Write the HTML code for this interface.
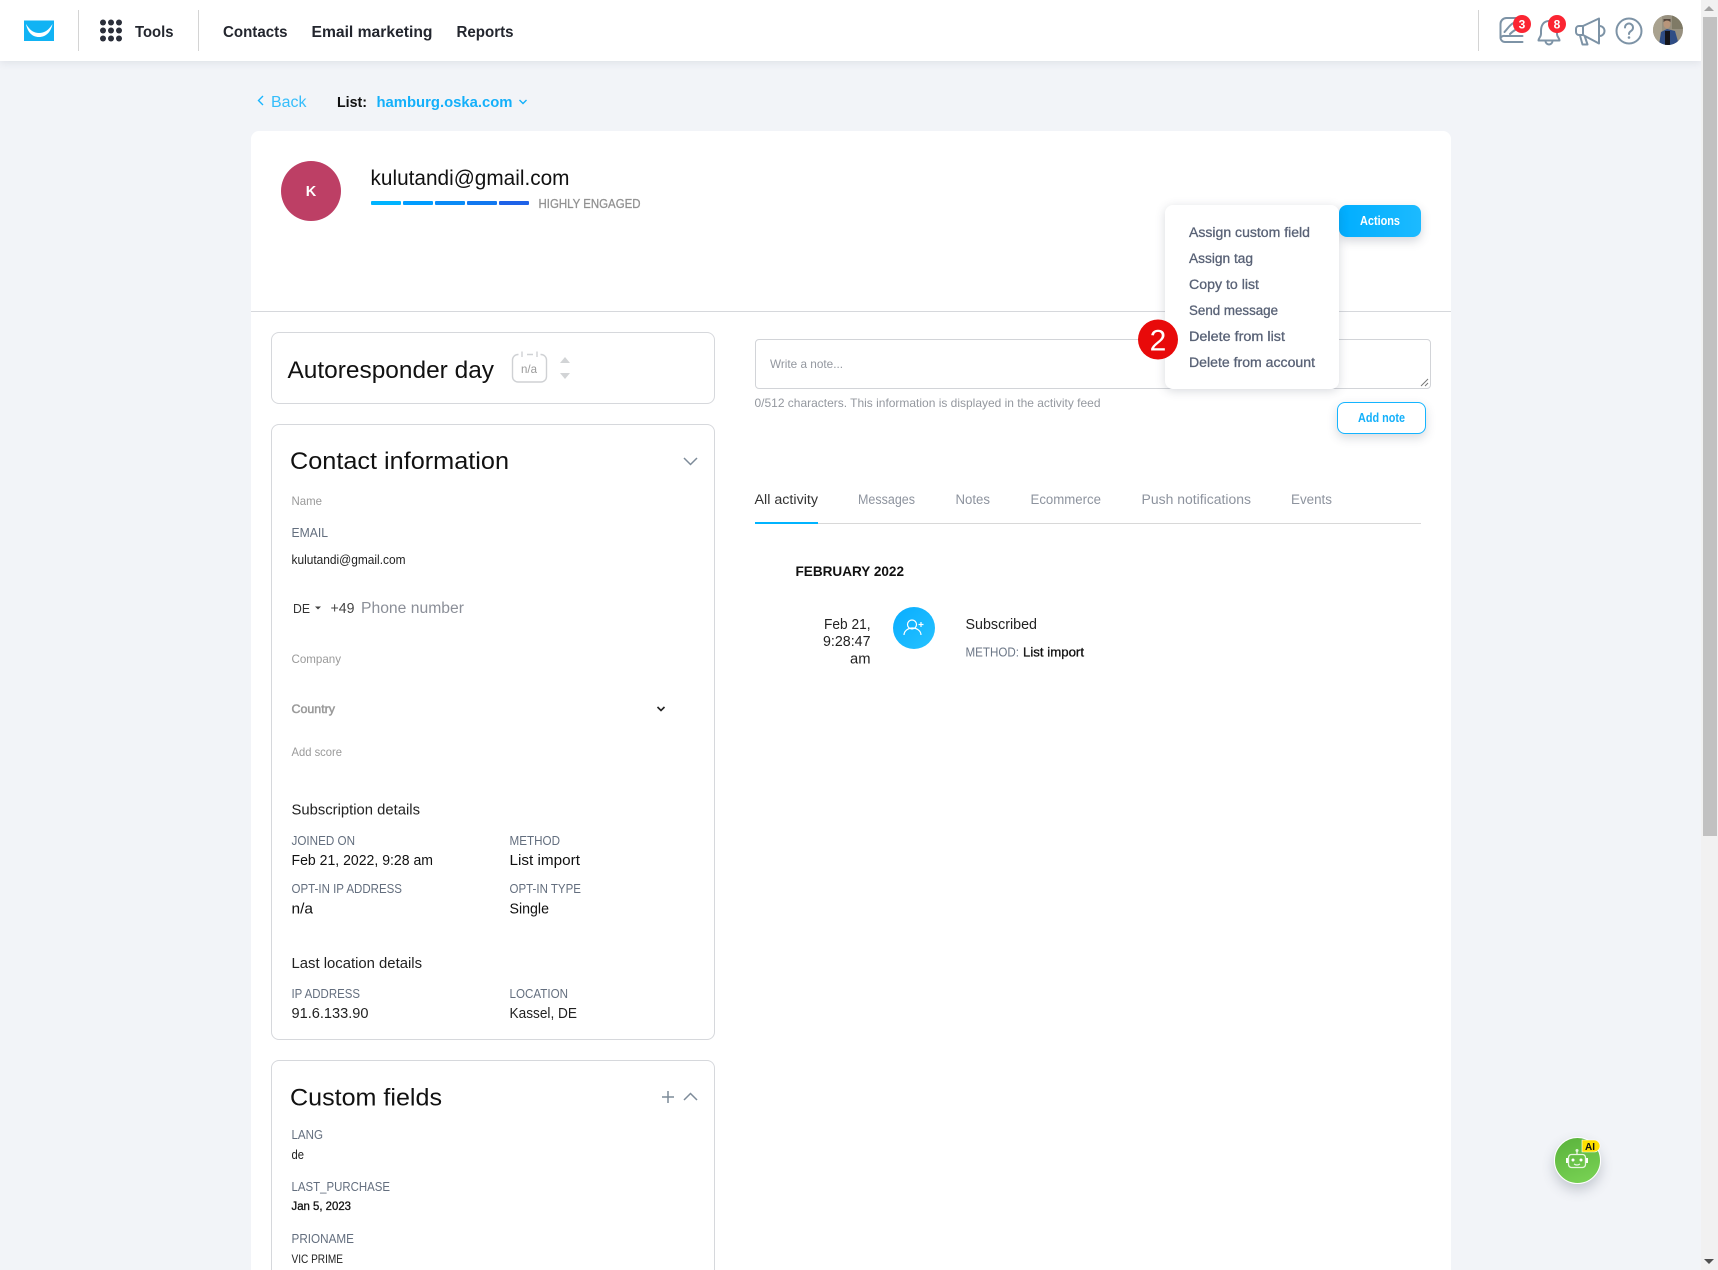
<!DOCTYPE html>
<html lang="en"><head><meta charset="utf-8"><title>Contact</title>
<style>
html,body{margin:0;padding:0;width:1718px;height:1270px;background:#f2f4f8;font-family:"Liberation Sans",sans-serif}
#w{position:relative;width:1718px;height:1270px;overflow:hidden;background:#f2f4f8}
.a{position:absolute;box-sizing:border-box}
svg.o{position:absolute;left:0;top:0;display:block}
text{font-family:"Liberation Sans",sans-serif}
.m{stroke:currentColor;stroke-width:.3px}
.b{font-weight:bold}
.l{font-size:12.5px;fill:#636e7e}
.v{font-size:14.5px;fill:#111}
.g{font-size:12px;fill:#9a9a9a}
.h{font-size:24px;fill:#111}
.n{font-size:15.5px;fill:#23262e;font-weight:bold}
.i{font-size:13.5px;fill:#596276;color:#596276}
.t{font-size:13.5px;fill:#8d939e}
.ic{fill:none;stroke:#7d93a6;stroke-width:2;stroke-linecap:round;stroke-linejoin:round}
</style></head><body><div id="w">
<div class="a" style="left:251px;top:131px;width:1200px;height:1139px;background:#fff;border-radius:8px 8px 0 0"></div>
<div class="a" style="left:251px;top:311px;width:1200px;height:1px;background:#d6d8dc"></div>
<div class="a" style="left:271px;top:332px;width:444px;height:72px;border:1px solid #d6d8dc;border-radius:8px;background:#fff"></div>
<div class="a" style="left:271px;top:424px;width:444px;height:616px;border:1px solid #d6d8dc;border-radius:8px;background:#fff"></div>
<div class="a" style="left:271px;top:1060px;width:444px;height:230px;border:1px solid #d6d8dc;border-radius:8px;background:#fff"></div>
<div class="a" style="left:755px;top:339px;width:676px;height:50px;border:1px solid #d2d4d8;border-radius:4px;background:#fff"></div>
<div class="a" style="left:1337px;top:402px;width:89px;height:32px;border:1px solid #14b4ff;border-radius:8px;background:#fff;box-shadow:0 4px 10px rgba(60,70,90,.2)"></div>
<div class="a" style="left:755px;top:523px;width:666px;height:1px;background:#d8d8d8"></div>
<div class="a" style="left:755px;top:522px;width:63px;height:2px;background:#00b4ff"></div>
<div class="a" style="left:1339px;top:205px;width:82px;height:32px;border-radius:8px;background:linear-gradient(90deg,#00aeff,#1cbaff);box-shadow:0 4px 10px rgba(60,70,90,.22)"></div>
<div class="a" style="left:1165px;top:205px;width:174px;height:184px;border-radius:8px;background:#fff;box-shadow:0 2px 10px rgba(60,70,90,.2)"></div>
<div class="a" style="left:0;top:0;width:1701px;height:61px;background:#fff;box-shadow:0 2px 8px rgba(60,70,90,.1)"></div>
<div class="a" style="left:1701px;top:0;width:17px;height:1270px;background:#f1f1f1"></div>
<div class="a" style="left:1703px;top:17px;width:14px;height:819px;background:#c1c1c1"></div>
<div class="a" style="left:1554px;top:1137px;width:47px;height:47px;border-radius:50%;border:1px solid #fff;background:linear-gradient(160deg,#5ab23c,#7ad455);box-shadow:0 6px 12px rgba(60,70,90,.25)"></div>

<svg class="o" width="1718" height="1270" viewBox="0 0 1718 1270">
<defs><clipPath id="av"><circle cx="1668" cy="30" r="15"/></clipPath></defs>
<!-- logo -->
<path d="M24 20.500H54V41H24Z" fill="#11b3f4"/>
<path d="M26 24C30 30.500 34 33 39 33C44 33 48.500 30.500 52.500 24C51 32 46 37 39 37C32 37 27.500 32 26 24Z" fill="#fff"/>
<rect x="78" y="10" width="1" height="41" fill="#d4d4d4"/>
<rect x="198" y="10" width="1" height="41" fill="#d4d4d4"/>
<rect x="1478" y="10" width="1" height="41" fill="#d4d4d4"/>
<g fill="#2b2f3a"><circle cx="103" cy="22.500" r="3"/><circle cx="111" cy="22.500" r="3"/><circle cx="119" cy="22.500" r="3"/><circle cx="103" cy="30.500" r="3"/><circle cx="111" cy="30.500" r="3"/><circle cx="119" cy="30.500" r="3"/><circle cx="103" cy="38.500" r="3"/><circle cx="111" cy="38.500" r="3"/><circle cx="119" cy="38.500" r="3"/></g>
<text class="n" x="135" y="37" textLength="38.500" lengthAdjust="spacingAndGlyphs">Tools</text>
<text class="n" x="223" y="37" textLength="64.500" lengthAdjust="spacingAndGlyphs">Contacts</text>
<text class="n" x="311.500" y="37" textLength="121" lengthAdjust="spacingAndGlyphs">Email marketing</text>
<text class="n" x="456.500" y="37" textLength="57" lengthAdjust="spacingAndGlyphs">Reports</text>
<!-- right icons -->
<path class="ic" d="M1522.500 42H1505a4.500 4.500 0 0 1-4.500-4.500V24a6 6 0 0 1 6-6H1519M1500.500 38a4.500 4.500 0 0 1 4.500-2H1522.500M1504.500 32c3-3 5-7 9-9M1510 34c3-3 6-5 10-6"/>
<path class="ic" d="M1549 21c-5.500 0-8 4.500-8 10v3c0 3-2.500 4-2.500 6.500H1559.500c0-2.500-2.500-3.500-2.500-6.500v-3c0-5.500-2.500-10-8-10ZM1545.500 41a3.500 3.500 0 0 0 7 0"/>
<path class="ic" d="M1583 26L1599 18.500V43.500L1583 35H1579a3 3 0 0 1-3-3V29a3 3 0 0 1 3-3ZM1583 26V35M1599.500 26a5 5 0 0 1 0 10M1580 35.500L1582.500 44.500H1587.500L1585 37"/>
<circle class="ic" cx="1629" cy="31" r="12.500"/>
<path class="ic" d="M1625 27.500a4 4 0 1 1 6 3.500c-1.300.8-2 1.500-2 3"/><circle cx="1629" cy="37.500" r="1.300" fill="#7d93a6"/>
<circle cx="1522" cy="24" r="9" fill="#fb2532"/><text class="b" x="1522" y="28.500" font-size="12" fill="#fff" text-anchor="middle">3</text>
<circle cx="1557" cy="24" r="9" fill="#fb2532"/><text class="b" x="1557" y="28.500" font-size="12" fill="#fff" text-anchor="middle">8</text>
<g clip-path="url(#av)"><rect x="1653" y="15" width="30" height="30" fill="#989180"/><rect x="1653" y="15" width="9" height="30" fill="#a9a28f"/><rect x="1672" y="15" width="11" height="14" fill="#7f7a66"/><path d="M1659 45L1661 32L1667 29L1675 31L1679 45Z" fill="#2f4d85"/><path d="M1665 45V31L1670 31V45Z" fill="#14141a"/><ellipse cx="1667" cy="24" rx="3.500" ry="4.500" fill="#b8957a"/><path d="M1663.500 22q3.500-3 7 0v-3h-7Z" fill="#54443a"/></g>
<!-- breadcrumb -->
<path d="M263 96l-4.500 4.500 4.500 4.500" fill="none" stroke="#19b5ff" stroke-width="1.400"/>
<text x="271" y="107" font-size="15.500" fill="#35bdfb" textLength="35.500" lengthAdjust="spacingAndGlyphs">Back</text>
<text class="b" x="337" y="107" font-size="14.500" fill="#111" textLength="30" lengthAdjust="spacingAndGlyphs">List:</text>
<text class="b" x="376.500" y="107" font-size="15" fill="#14b0fa" textLength="136" lengthAdjust="spacingAndGlyphs">hamburg.oska.com</text>
<path d="M519.500 100l3.500 3.500 3.500-3.500" fill="none" stroke="#14b0fa" stroke-width="1.400"/>
<!-- head -->
<circle cx="311" cy="191" r="30" fill="#bd3f65"/>
<text class="b" x="311" y="196" font-size="14.500" fill="#fff" text-anchor="middle">K</text>
<text x="370.500" y="185" font-size="21" fill="#111" textLength="199" lengthAdjust="spacingAndGlyphs">kulutandi@gmail.com</text>
<rect x="371" y="201" width="30" height="4" rx="1" fill="#00b4ff"/><rect x="403" y="201" width="30" height="4" rx="1" fill="#009dff"/><rect x="435" y="201" width="30" height="4" rx="1" fill="#0a8bf6"/><rect x="467" y="201" width="30" height="4" rx="1" fill="#1178f0"/><rect x="499" y="201" width="30" height="4" rx="1" fill="#1e62e8"/>
<text class="m" x="538.500" y="208" font-size="13" fill="#929292" style="color:#929292" textLength="102" lengthAdjust="spacingAndGlyphs">HIGHLY ENGAGED</text>
<!-- actions -->
<text class="b" x="1360" y="225" font-size="12.500" fill="#fff" textLength="40" lengthAdjust="spacingAndGlyphs">Actions</text>
<text class="i m" x="1189" y="237" textLength="121" lengthAdjust="spacingAndGlyphs">Assign custom field</text>
<text class="i m" x="1189" y="263" textLength="64" lengthAdjust="spacingAndGlyphs">Assign tag</text>
<text class="i m" x="1189" y="289" textLength="70" lengthAdjust="spacingAndGlyphs">Copy to list</text>
<text class="i m" x="1189" y="315" textLength="89" lengthAdjust="spacingAndGlyphs">Send message</text>
<text class="i m" x="1189" y="341" textLength="96" lengthAdjust="spacingAndGlyphs">Delete from list</text>
<text class="i m" x="1189" y="367" textLength="126" lengthAdjust="spacingAndGlyphs">Delete from account</text>
<circle cx="1158" cy="339.500" r="20" fill="#e80a0a"/>
<text x="1158" y="350.500" font-size="30" fill="#fff" text-anchor="middle">2</text>
<path d="M1421 386l7-7M1425 386l3-3" stroke="#777" stroke-width="1"/>
<!-- note -->
<text x="770" y="368" font-size="12" fill="#93979f" textLength="73" lengthAdjust="spacingAndGlyphs">Write a note...</text>
<text x="754.500" y="407" font-size="12" fill="#94989f" textLength="346" lengthAdjust="spacingAndGlyphs">0/512 characters. This information is displayed in the activity feed</text>
<text class="b" x="1358" y="422" font-size="12.500" fill="#14b0fa" textLength="47" lengthAdjust="spacingAndGlyphs">Add note</text>
<!-- autoresponder -->
<text x="287.500" y="378" font-size="24.500" fill="#111" textLength="206.500" lengthAdjust="spacingAndGlyphs">Autoresponder day</text>
<path d="M518.500 354.500H518a5.500 5.500 0 0 0-5.500 5.500V376.500a5.500 5.500 0 0 0 5.500 5.500H541a5.500 5.500 0 0 0 5.500-5.500V360a5.500 5.500 0 0 0-5.500-5.500H540.500M522 351.500V357M537 351.500V357M527 354.500H533" fill="none" stroke="#cfd1d4" stroke-width="1.400"/>
<text x="521" y="373" font-size="12" fill="#9a9a9a" textLength="16" lengthAdjust="spacingAndGlyphs">n/a</text>
<path d="M565 357l5 6h-10ZM565 379l5-6h-10Z" fill="#d2d4d6"/>
<!-- contact info -->
<text class="h" x="290" y="469" textLength="219" lengthAdjust="spacingAndGlyphs">Contact information</text>
<path d="M684 458l6.500 6.500 6.500-6.500" fill="none" stroke="#7d8b99" stroke-width="1.500"/>
<text class="g" x="291.500" y="505" textLength="30.500" lengthAdjust="spacingAndGlyphs">Name</text>
<text class="l" x="291.500" y="537" textLength="36.500" lengthAdjust="spacingAndGlyphs">EMAIL</text>
<text x="291.500" y="564" font-size="12.500" fill="#222" textLength="114" lengthAdjust="spacingAndGlyphs">kulutandi@gmail.com</text>
<text x="293" y="613" font-size="13" fill="#333" textLength="17" lengthAdjust="spacingAndGlyphs">DE</text>
<path d="M315 606.500h6l-3 3Z" fill="#444"/>
<text x="330.500" y="613" font-size="14.500" fill="#444" textLength="24" lengthAdjust="spacingAndGlyphs">+49</text>
<text x="361" y="613" font-size="15.500" fill="#8b8f98" textLength="103" lengthAdjust="spacingAndGlyphs">Phone number</text>
<text class="g" x="291.500" y="663" textLength="49.500" lengthAdjust="spacingAndGlyphs">Company</text>
<text class="g m" x="291.500" y="713" textLength="43.500" lengthAdjust="spacingAndGlyphs" style="color:#9a9a9a;stroke-width:.5px">Country</text>
<path d="M657.500 707l3.500 3.500 3.500-3.500" fill="none" stroke="#222" stroke-width="1.600"/>
<text class="g" x="291.500" y="756" textLength="50.500" lengthAdjust="spacingAndGlyphs">Add score</text>
<text x="291.500" y="814.500" font-size="14.500" fill="#222" textLength="128.500" lengthAdjust="spacingAndGlyphs">Subscription details</text>
<text class="l" x="291.500" y="845" textLength="63.500" lengthAdjust="spacingAndGlyphs">JOINED ON</text>
<text class="v" x="291.500" y="865" textLength="141.500" lengthAdjust="spacingAndGlyphs">Feb 21, 2022, 9:28 am</text>
<text class="l" x="509.500" y="845" textLength="50.500" lengthAdjust="spacingAndGlyphs">METHOD</text>
<text class="v" x="509.500" y="865" textLength="70.500" lengthAdjust="spacingAndGlyphs">List import</text>
<text class="l" x="291.500" y="893" textLength="110.500" lengthAdjust="spacingAndGlyphs">OPT-IN IP ADDRESS</text>
<text class="v" x="291.500" y="913.500" textLength="21.500" lengthAdjust="spacingAndGlyphs">n/a</text>
<text class="l" x="509.500" y="893" textLength="71.500" lengthAdjust="spacingAndGlyphs">OPT-IN TYPE</text>
<text class="v" x="509.500" y="913.500" textLength="39.500" lengthAdjust="spacingAndGlyphs">Single</text>
<text x="291.500" y="968" font-size="14.500" fill="#222" textLength="130.500" lengthAdjust="spacingAndGlyphs">Last location details</text>
<text class="l" x="291.500" y="998" textLength="68.500" lengthAdjust="spacingAndGlyphs">IP ADDRESS</text>
<text class="v" x="291.500" y="1018" textLength="77" lengthAdjust="spacingAndGlyphs" style="fill:#222">91.6.133.90</text>
<text class="l" x="509.500" y="998" textLength="58.500" lengthAdjust="spacingAndGlyphs">LOCATION</text>
<text class="v" x="509.500" y="1018" textLength="67.500" lengthAdjust="spacingAndGlyphs" style="fill:#222">Kassel, DE</text>
<!-- custom fields -->
<text class="h" x="290" y="1105.500" textLength="152" lengthAdjust="spacingAndGlyphs">Custom fields</text>
<path d="M668 1091v12M662 1097h12" stroke="#7d8b99" stroke-width="1.500" fill="none"/>
<path d="M684 1100l6.500-6.500 6.500 6.500" fill="none" stroke="#7d8b99" stroke-width="1.500"/>
<text class="l" x="291.500" y="1139" textLength="31.500" lengthAdjust="spacingAndGlyphs">LANG</text>
<text x="291.500" y="1159" font-size="12.500" fill="#222" textLength="12.500" lengthAdjust="spacingAndGlyphs">de</text>
<text class="l" x="291.500" y="1191" textLength="98.500" lengthAdjust="spacingAndGlyphs">LAST_PURCHASE</text>
<text class="m" x="291.500" y="1210" font-size="12" fill="#111" style="color:#111" textLength="59.500" lengthAdjust="spacingAndGlyphs">Jan 5, 2023</text>
<text class="l" x="291.500" y="1243" textLength="62.500" lengthAdjust="spacingAndGlyphs">PRIONAME</text>
<text x="291.500" y="1263" font-size="12" fill="#222" textLength="51.500" lengthAdjust="spacingAndGlyphs">VIC PRIME</text>
<!-- tabs -->
<text x="754.500" y="504" font-size="13.500" fill="#333" textLength="63.500" lengthAdjust="spacingAndGlyphs">All activity</text>
<text class="t" x="858" y="504" textLength="57" lengthAdjust="spacingAndGlyphs">Messages</text>
<text class="t" x="955.500" y="504" textLength="34.500" lengthAdjust="spacingAndGlyphs">Notes</text>
<text class="t" x="1030.500" y="504" textLength="70.500" lengthAdjust="spacingAndGlyphs">Ecommerce</text>
<text class="t" x="1141.500" y="504" textLength="109.500" lengthAdjust="spacingAndGlyphs">Push notifications</text>
<text class="t" x="1291" y="504" textLength="41" lengthAdjust="spacingAndGlyphs">Events</text>
<text class="b" x="795.500" y="576" font-size="14" fill="#111" textLength="108.500" lengthAdjust="spacingAndGlyphs">FEBRUARY 2022</text>
<text x="824" y="629" font-size="14.500" fill="#222" textLength="46.500" lengthAdjust="spacingAndGlyphs">Feb 21,</text>
<text x="823" y="646" font-size="14.500" fill="#222" textLength="47.500" lengthAdjust="spacingAndGlyphs">9:28:47</text>
<text x="850" y="663.500" font-size="14.500" fill="#222" textLength="20.500" lengthAdjust="spacingAndGlyphs">am</text>
<defs><linearGradient id="cg" x1="0" y1="0" x2="1" y2="1"><stop offset="0" stop-color="#08adff"/><stop offset="1" stop-color="#26c2ff"/></linearGradient></defs>
<circle cx="914" cy="628" r="21" fill="url(#cg)"/>
<g fill="none" stroke="#fff" stroke-width="1.200"><circle cx="912" cy="624.500" r="4.500"/><path d="M904 635a8.500 7 0 0 1 17 0M921 622v5M918.500 624.500h5"/></g>
<text x="965.500" y="629" font-size="14.500" fill="#222" textLength="71.500" lengthAdjust="spacingAndGlyphs">Subscribed</text>
<text x="965.500" y="656.500" font-size="12.500" fill="#6b7686" textLength="53.500" lengthAdjust="spacingAndGlyphs">METHOD:</text>
<text class="m" x="1023" y="656.500" font-size="12.500" fill="#111" style="color:#111" textLength="61" lengthAdjust="spacingAndGlyphs">List import</text>
<!-- bot -->
<g transform="translate(0,1)"><g fill="none" stroke="#e9f6e2" stroke-width="1.300"><rect x="1568.500" y="1153.500" width="17" height="13" rx="3"/><path d="M1577 1153v-2.500M1574 1163q3 2 6 0"/></g>
<circle cx="1577" cy="1149.500" r="1.500" fill="#e9f6e2"/><circle cx="1573" cy="1159" r="1.500" fill="#fff"/><circle cx="1581" cy="1159" r="1.500" fill="#fff"/><rect x="1566" y="1157" width="2" height="5" fill="#fff"/><rect x="1586" y="1157" width="2" height="5" fill="#fff"/></g>
<path d="M1582 1140H1594a6 6 0 0 1 0 12H1582Z" fill="#ffe000" stroke="#fff" stroke-width=".6"/>
<text class="b" x="1590" y="1150" font-size="10" fill="#111" text-anchor="middle">AI</text>
<!-- scroll arrows -->
<path d="M1709 6l5 5h-10Z" fill="#a3a3a3"/><path d="M1709 1264l5-5h-10Z" fill="#505050"/>
</svg>
</div></body></html>
